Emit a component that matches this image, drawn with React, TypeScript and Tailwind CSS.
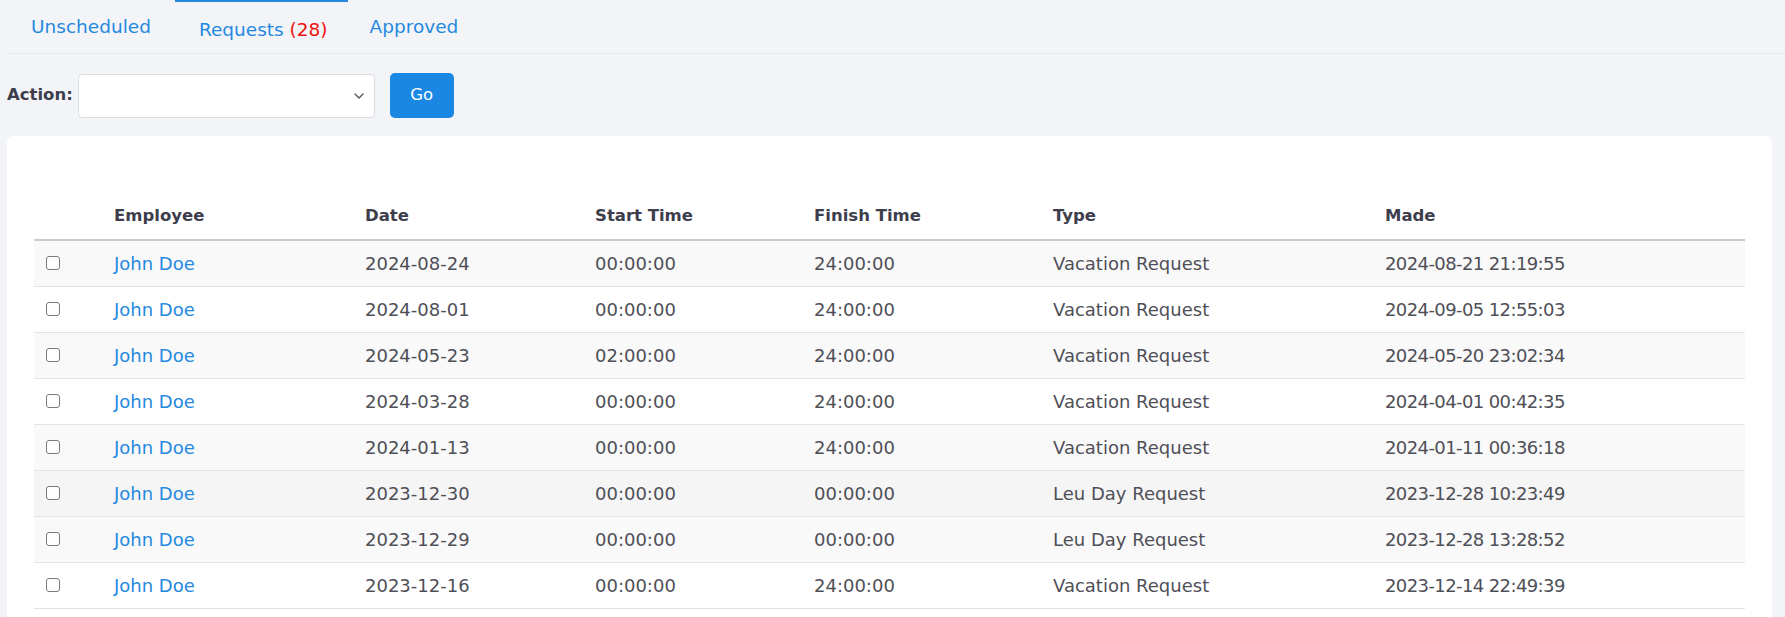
import React from "react";

const rows = [
  ["2024-08-24", "00:00:00", "24:00:00", "Vacation Request", "2024-08-21 21:19:55"],
  ["2024-08-01", "00:00:00", "24:00:00", "Vacation Request", "2024-09-05 12:55:03"],
  ["2024-05-23", "02:00:00", "24:00:00", "Vacation Request", "2024-05-20 23:02:34"],
  ["2024-03-28", "00:00:00", "24:00:00", "Vacation Request", "2024-04-01 00:42:35"],
  ["2024-01-13", "00:00:00", "24:00:00", "Vacation Request", "2024-01-11 00:36:18"],
  ["2023-12-30", "00:00:00", "00:00:00", "Leu Day Request", "2023-12-28 10:23:49"],
  ["2023-12-29", "00:00:00", "00:00:00", "Leu Day Request", "2023-12-28 13:28:52"],
  ["2023-12-16", "00:00:00", "24:00:00", "Vacation Request", "2023-12-14 22:49:39"],
];

const font = { fontFamily: "'DejaVu Sans', 'Noto Sans', sans-serif" };

export default function App() {
  return (
    <div className="min-h-[617px] bg-[#f3f4f7] pb-10" style={font}>
      {/* Tabs */}
      <div className="ml-[7px] flex h-[54px] border-b border-[#e6e8ec] text-[18.5px] text-[#2589e0]">
        <div className="flex items-center px-6">Unscheduled</div>
        <div className="flex items-center border-t-[2px] border-[#2589e0] pl-6 pr-[20px] pt-[5px]">
          Requests&nbsp;<span className="text-[#ee1111]">(28)</span>
        </div>
        <div className="flex items-center px-[22px]">Approved</div>
      </div>

      {/* Action row */}
      <div className="mt-[19px] flex items-center pl-[7px]">
        <span className="text-[16.5px] font-bold text-[#3d3d4c]">Action:</span>
        <div className="ml-[5px] flex h-[44px] w-[297px] items-center justify-end rounded-[4px] border border-[#d9dce1] bg-white pr-[10px]">
          <svg width="10" height="6" viewBox="0 0 10 6" fill="none">
            <path d="M1 1l4 4 4-4" stroke="#555" strokeWidth="1.4" strokeLinecap="round" strokeLinejoin="round" />
          </svg>
        </div>
        <button className="ml-[15px] flex h-[45px] w-[64px] items-center justify-center rounded-[5px] bg-[#1a88e3] text-[16.5px] text-white">
          Go
        </button>
      </div>

      {/* Card */}
      <div className="mx-[7px] mt-[18px] w-[1765px] rounded-[6px] bg-white px-[27px] pt-[58px] pb-10">
        <table className="w-[1711px] table-fixed border-collapse text-left">
          <colgroup>
            <col className="w-[68px]" />
            <col className="w-[251px]" />
            <col className="w-[230px]" />
            <col className="w-[219px]" />
            <col className="w-[239px]" />
            <col className="w-[332px]" />
            <col className="w-[372px]" />
          </colgroup>
          <thead>
            <tr className="h-[46px] border-b-2 border-[#c9cbcf] text-[16.5px] text-[#3d3d4c]">
              <th className="px-3 font-bold"></th>
              <th className="px-3 font-bold">Employee</th>
              <th className="px-3 font-bold">Date</th>
              <th className="px-3 font-bold">Start Time</th>
              <th className="px-3 font-bold">Finish Time</th>
              <th className="px-3 font-bold">Type</th>
              <th className="px-3 font-bold">Made</th>
            </tr>
          </thead>
          <tbody className="text-[18px] text-[#4f4f57]">
            {rows.map((r, i) => (
              <tr
                key={i}
                className={
                  "h-[46px] border-b border-[#e2e3e5] " +
                  (i === 5 ? "bg-[#f5f5f5]" : i % 2 === 0 ? "bg-[#f9f9f9]" : "bg-white")
                }
              >
                <td className="px-3">
                  <span className="block h-[14px] w-[14px] rounded-[3px] border border-[#7a7a7a] bg-white" />
                </td>
                <td className="px-3 text-[#2589e0]">John Doe</td>
                <td className="px-3">{r[0]}</td>
                <td className="px-3">{r[1]}</td>
                <td className="px-3">{r[2]}</td>
                <td className="px-3">{r[3]}</td>
                <td className="px-3 tracking-[-0.6px]">{r[4]}</td>
              </tr>
            ))}
          </tbody>
        </table>
      </div>
    </div>
  );
}
